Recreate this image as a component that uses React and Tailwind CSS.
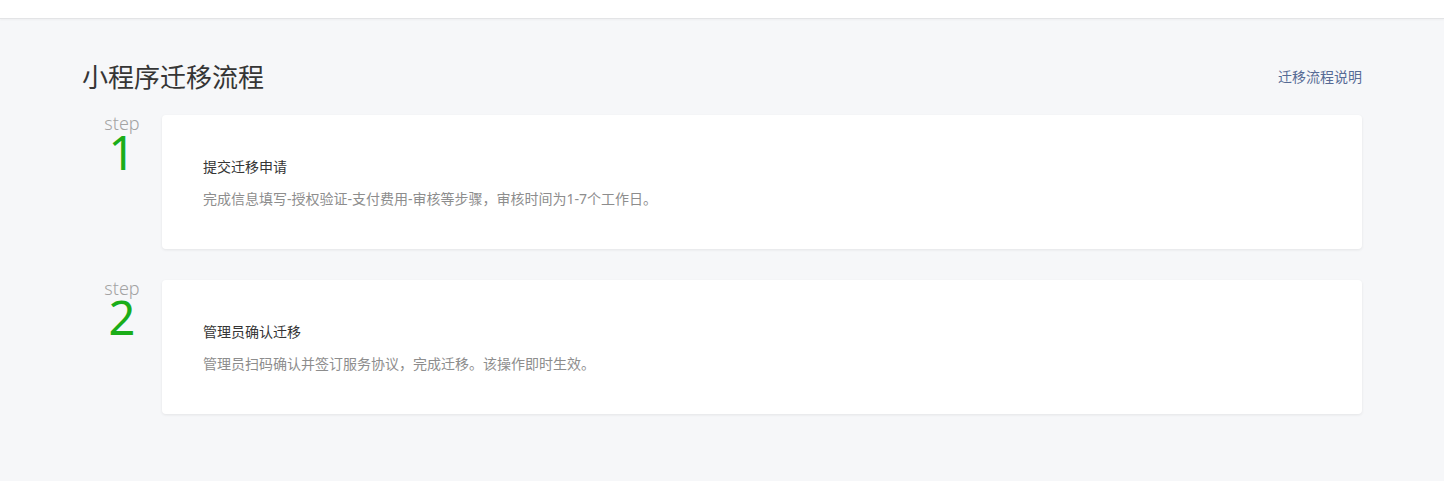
export default function App() {
  const steps = [
    { n: "1", title: "提交迁移申请", desc: "完成信息填写-授权验证-支付费用-审核等步骤，审核时间为1-7个工作日。" },
    { n: "2", title: "管理员确认迁移", desc: "管理员扫码确认并签订服务协议，完成迁移。该操作即时生效。" },
  ];
  return (
    <div className="min-h-[481px] bg-[#f6f7f9]" style={{ fontFamily: '"Noto Sans", "Noto Sans CJK SC", sans-serif' }}>
      <div className="h-[19px] bg-white border-b border-[#e3e4e6] shadow-[0_1px_2px_rgba(0,0,0,0.04)]"></div>
      <div className="mx-auto w-[1280px] pt-[40px] pb-[40px]">
        <div className="flex items-center justify-between h-[36px]">
          <h1 className="text-[26px] leading-[36px] text-[#353535] font-normal">小程序迁移流程</h1>
          <a className="text-[14px] leading-[20px] text-[#576b95] cursor-pointer">迁移流程说明</a>
        </div>
        <div className="mt-[20px] flex flex-col gap-[31px]">
          {steps.map((s) => (
            <div key={s.n} className="flex">
              <div className="w-[80px] shrink-0 flex flex-col items-center">
                <div className="text-[18px] leading-[20px] font-light text-[#a3a3a3] mt-[-2px]">step</div>
                <div className="text-[47px] leading-[36px] font-normal text-[#1aad19] mt-[1px]">{s.n}</div>
              </div>
              <div className="flex-1 bg-white rounded-[4px] shadow-[0_1px_3px_rgba(0,0,0,0.08)] h-[134px] px-[41px] pt-[42px]">
                <div className="text-[14px] leading-[20px] text-[#353535]">{s.title}</div>
                <div className="mt-[12px] text-[14px] leading-[20px] text-[#8d8d8d]">{s.desc}</div>
              </div>
            </div>
          ))}
        </div>
      </div>
    </div>
  );
}
